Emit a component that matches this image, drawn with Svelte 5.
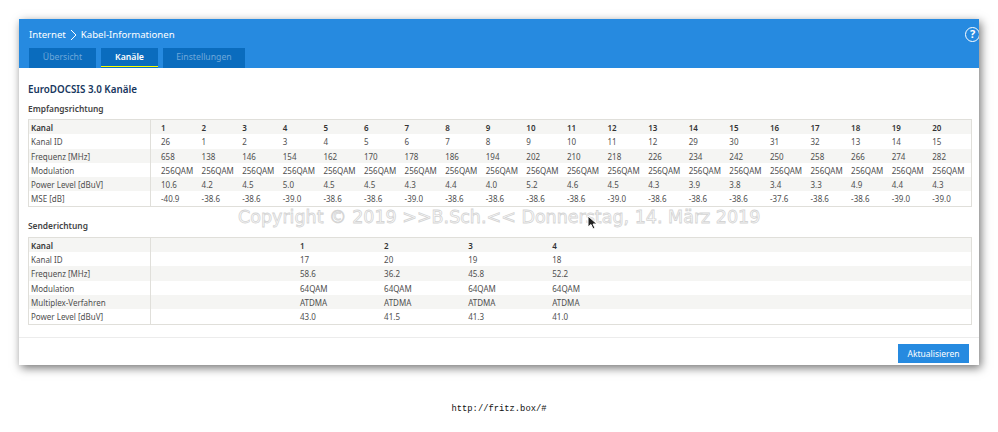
<script>
  const rx = [
    { label: "Kanal", head: true, cells: Array.from({ length: 20 }, (_, i) => i + 1) },
    { label: "Kanal ID", cells: [26, 1, 2, 3, 4, 5, 6, 7, 8, 9, 10, 11, 12, 29, 30, 31, 32, 13, 14, 15] },
    { label: "Frequenz [MHz]", cells: [658, 138, 146, 154, 162, 170, 178, 186, 194, 202, 210, 218, 226, 234, 242, 250, 258, 266, 274, 282] },
    { label: "Modulation", cells: Array(20).fill("256QAM") },
    { label: "Power Level [dBuV]", cells: ["10.6", "4.2", "4.5", "5.0", "4.5", "4.5", "4.3", "4.4", "4.0", "5.2", "4.6", "4.5", "4.3", "3.9", "3.8", "3.4", "3.3", "4.9", "4.4", "4.3"] },
    { label: "MSE [dB]", cells: ["-40.9", "-38.6", "-38.6", "-39.0", "-38.6", "-38.6", "-39.0", "-38.6", "-38.6", "-38.6", "-38.6", "-39.0", "-38.6", "-38.6", "-38.6", "-37.6", "-38.6", "-38.6", "-39.0", "-39.0"] }
  ];

  const tx = [
    { label: "Kanal", head: true, cells: [1, 2, 3, 4] },
    { label: "Kanal ID", cells: [17, 20, 19, 18] },
    { label: "Frequenz [MHz]", cells: ["58.6", "36.2", "45.8", "52.2"] },
    { label: "Modulation", cells: ["64QAM", "64QAM", "64QAM", "64QAM"] },
    { label: "Multiplex-Verfahren", cells: ["ATDMA", "ATDMA", "ATDMA", "ATDMA"] },
    { label: "Power Level [dBuV]", cells: ["43.0", "41.5", "41.3", "41.0"] }
  ];
</script>

<div class="page">
  <div class="window">
    <header>
      <div class="crumb">
        Internet
        <svg class="chev" width="7" height="12" viewBox="0 0 7 12"><path d="M1 1l5 5-5 5" fill="none" stroke="#fff" stroke-width="1" /></svg>
        Kabel-Informationen
      </div>
      <nav>
        <span class="tab first">Übersicht</span>
        <span class="tab active">Kanäle</span>
        <span class="tab last">Einstellungen</span>
      </nav>
      <span class="help">?</span>
    </header>

    <main>
      <h1>EuroDOCSIS 3.0 Kanäle</h1>

      <h2>Empfangsrichtung</h2>
      <div class="grid rx">
        {#each rx as row}
          <div class="row" class:head={row.head}>
            <div class="label">{row.label}</div>
            <div class="cells">
              {#each row.cells as c}<span>{c}</span>{/each}
            </div>
          </div>
        {/each}
      </div>

      <h2 class="second">Senderichtung</h2>
      <div class="grid tx">
        {#each tx as row}
          <div class="row" class:head={row.head}>
            <div class="label">{row.label}</div>
            <div class="cells">
              {#each row.cells as c}<span>{c}</span>{/each}
            </div>
          </div>
        {/each}
      </div>
    </main>

    <footer>
      <button>Aktualisieren</button>
    </footer>
  </div>

  <div class="url">http://fritz.box/#</div>

  <div class="watermark">Copyright © 2019 &gt;&gt;B.Sch.&lt;&lt; Donnerstag, 14. März 2019</div>
  <svg class="cursor" width="11" height="15" viewBox="0 0 11 15">
    <path d="M1 1v11l3-2.5 2 4.5 2-1-2-4h4z" fill="#222" stroke="#fff" stroke-width="1" />
  </svg>
</div>

<style>
  :global(body) {
    margin: 0;
    background: #fff;
  }

  .page {
    position: relative;
    width: 998px;
    height: 432px;
    padding: 19px 19px 0;
    box-sizing: border-box;
    overflow: hidden;
    font-family: "Noto Sans", sans-serif;
    color: #4f4f4f;
  }

  .window {
    width: 960px;
    height: 346px;
    background: #fff;
    display: flex;
    flex-direction: column;
    box-shadow: 2px 3px 9px rgba(0, 0, 0, 0.55);
  }

  header {
    position: relative;
    height: 49px;
    flex: none;
    background: #268ae0;
    overflow: hidden;
    color: #fff;
  }

  .crumb {
    display: flex;
    align-items: center;
    gap: 4px;
    padding: 9px 0 0 10px;
    height: 13px;
    font-size: 9.6px;
    line-height: 13px;
  }

  .chev {
    flex: none;
  }

  nav {
    display: flex;
    gap: 5px;
    margin: 7px 0 0 10px;
  }

  .tab {
    height: 20px;
    background: #0a6cbe;
    color: #6fa8da;
    font-size: 8.7px;
    line-height: 19px;
    text-align: center;
    box-sizing: border-box;
  }

  .tab.first {
    width: 67px;
  }

  .tab.last {
    width: 82px;
  }

  .tab.active {
    width: 57px;
    color: #fff;
    font-weight: 600;
    box-shadow: inset 0 -1px 0 #0a6cbe, inset 0 -2px 0 #ffff00;
  }

  .help {
    position: absolute;
    left: 946px;
    top: 8px;
    width: 15px;
    height: 15px;
    border: 1.5px solid #fff;
    border-radius: 50%;
    box-sizing: border-box;
    font-size: 11px;
    font-weight: 700;
    line-height: 12px;
    text-align: center;
  }

  main {
    flex: 1;
    padding: 15px 7px 0 9px;
  }

  h1 {
    margin: 0;
    font-size: 9.8px;
    line-height: 14px;
    font-weight: 600;
    color: #17375e;
  }

  h2 {
    margin: 5px 0 4px;
    font-size: 8.4px;
    line-height: 13px;
    font-weight: 600;
    color: #444;
  }

  h2.second {
    margin-top: 12px;
    margin-bottom: 5px;
  }

  .grid {
    width: 944px;
    border: 1px solid #e0dfda;
    box-sizing: border-box;
    font-size: 8px;
    line-height: 15.3px;
  }

  .row {
    display: flex;
    height: 14.3px;
  }

  .row:nth-child(odd) {
    background: #f5f5f3;
  }

  .row.head {
    color: #333;
    font-weight: 600;
  }

  .label {
    width: 122px;
    flex: none;
    box-sizing: border-box;
    padding-left: 2px;
    border-right: 1px solid #e0dfda;
  }

  .cells {
    display: flex;
    padding-left: 10px;
  }

  .rx .cells span {
    width: 40.6px;
    flex: none;
    white-space: nowrap;
  }

  .tx .cells {
    padding-left: 149px;
  }

  .tx .cells span {
    width: 84.1px;
    flex: none;
  }

  footer {
    flex: none;
    height: 27px;
    box-sizing: border-box;
    border-top: 1px solid #ececec;
    display: flex;
    justify-content: flex-end;
    padding: 6px 10px 0 0;
    margin-bottom: 1px;
  }

  button {
    width: 71px;
    height: 19px;
    padding: 0;
    border: 0;
    background: #268ae0;
    color: #fff;
    font: 8.5px "Noto Sans", sans-serif;
  }

  .url {
    margin-top: 38px;
    text-align: center;
    font-family: "Liberation Mono", monospace;
    font-size: 8.8px;
    line-height: 12px;
    color: #111;
  }

  .watermark {
    position: absolute;
    left: 238px;
    top: 206px;
    font-family: "DejaVu Sans", sans-serif;
    font-size: 17.5px;
    line-height: 22px;
    white-space: nowrap;
    color: #fff;
    -webkit-text-stroke: 0.8px #d4d4d4;
  }

  .cursor {
    position: absolute;
    left: 587px;
    top: 215px;
  }
</style>
